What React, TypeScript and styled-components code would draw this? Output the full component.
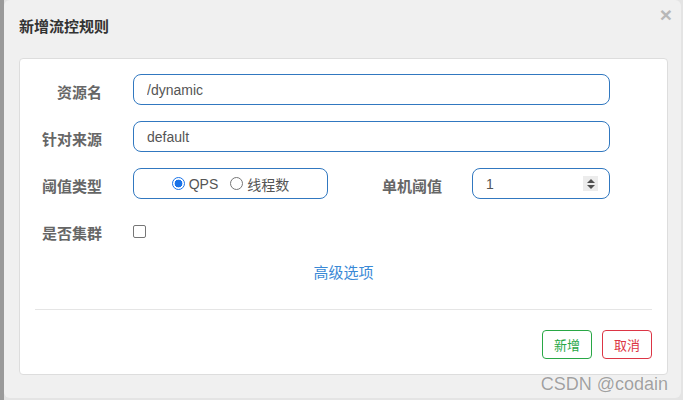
import styled, { createGlobalStyle } from 'styled-components';

const GlobalStyle = createGlobalStyle`
  html, body {
    margin: 0;
    padding: 0;
  }
  body {
    background: linear-gradient(to right, #9a9a9a 4px, #e4e4e4 4px);
    font-family: "Liberation Sans", "Noto Sans CJK SC", sans-serif;
  }
`;

const FONT = `"Liberation Sans", "Noto Sans CJK SC", sans-serif`;
const BLUE_BORDER = '#3178c0';

const Page = styled.div`
  position: relative;
  width: 683px;
  height: 400px;
  box-sizing: border-box;
  padding: 0 2px 2px 4px;
  display: flex;
  overflow: hidden;
`;

const Dialog = styled.div`
  flex: 1;
  display: flex;
  flex-direction: column;
  background: #f0f0f0;
  border-radius: 6px;
  padding: 0 13px 0 15px;
`;

const Header = styled.div`
  height: 58px;
  display: flex;
  justify-content: space-between;
  align-items: flex-start;
  flex-shrink: 0;
`;

const Title = styled.h4`
  margin: 17px 0 0;
  font-size: 15px;
  line-height: 20px;
  font-weight: 700;
  color: #333;
`;

const Close = styled.button`
  margin: 4px -4px 0 0;
  padding: 0;
  border: none;
  background: none;
  font-family: ${FONT};
  font-size: 21px;
  font-weight: 700;
  line-height: 1;
  color: #b8b8b8;
  cursor: pointer;
`;

const Panel = styled.div`
  height: 317px;
  box-sizing: border-box;
  background: #fff;
  border: 1px solid #ddd;
  border-radius: 4px;
  padding: 15px;
  display: flex;
  flex-direction: column;
`;

const Row = styled.div`
  display: flex;
  align-items: center;
  height: 31px;
  margin-bottom: 16px;
`;

const Label = styled.label<{ $width: number; $gap: number }>`
  width: ${({ $width }) => $width}px;
  padding: 4px ${({ $gap }) => $gap}px 0 0;
  box-sizing: border-box;
  flex-shrink: 0;
  text-align: right;
  font-size: 15px;
  font-weight: 700;
  color: #666;
`;

const TextInput = styled.input`
  width: 477px;
  height: 31px;
  box-sizing: border-box;
  border: 1px solid ${BLUE_BORDER};
  border-radius: 8px;
  padding: 0 13px;
  font-family: ${FONT};
  font-size: 14px;
  color: #555;
  outline: none;
`;

const RadioBox = styled.div`
  width: 195px;
  height: 31px;
  box-sizing: border-box;
  border: 1px solid ${BLUE_BORDER};
  border-radius: 8px;
  display: flex;
  align-items: center;
  justify-content: center;
  font-size: 14px;
  color: #555;
`;

const RadioOption = styled.span`
  display: flex;
  align-items: center;
  gap: 4px;
  margin: 0 6px;
`;

const RadioDot = styled.span<{ $checked?: boolean }>`
  width: 13px;
  height: 13px;
  box-sizing: border-box;
  border-radius: 50%;
  border: 1px solid ${({ $checked }) => ($checked ? '#1a73e8' : '#767676')};
  background: ${({ $checked }) =>
    $checked ? 'radial-gradient(circle, #1a73e8 0 3.6px, #fff 4.2px)' : '#fff'};
`;

const NumberBox = styled.div`
  width: 138px;
  height: 31px;
  box-sizing: border-box;
  border: 1px solid ${BLUE_BORDER};
  border-radius: 8px;
  display: flex;
  align-items: center;
  padding: 0 11px 0 13px;
  font-size: 14px;
  color: #555;
`;

const NumberValue = styled.span`
  flex: 1;
`;

const Spinner = styled.span`
  width: 15px;
  height: 15px;
  background: #ececec;
  display: flex;
  flex-direction: column;
  align-items: center;
  justify-content: center;
  gap: 2px;
`;

const Arrow = styled.span<{ $up?: boolean }>`
  width: 0;
  height: 0;
  border-left: 4px solid transparent;
  border-right: 4px solid transparent;
  ${({ $up }) => ($up ? 'border-bottom: 4px solid #505050;' : 'border-top: 4px solid #505050;')}
`;

const CheckBox = styled.span`
  width: 13px;
  height: 13px;
  margin-top: 2px;
  box-sizing: border-box;
  border: 1px solid #767676;
  border-radius: 2px;
  background: #fff;
`;

const LinkRow = styled.div`
  display: flex;
  justify-content: center;
  margin-top: 2px;
  height: 17px;
  line-height: 17px;
`;

const Link = styled.a`
  font-size: 15px;
  color: #3a89d6;
  text-decoration: none;
  cursor: pointer;
`;

const Divider = styled.hr`
  margin: 28px 0 0;
  border: none;
  border-top: 1px solid #e5e5e5;
`;

const Footer = styled.div`
  margin-top: 20px;
  display: flex;
  justify-content: flex-end;
  gap: 10px;
`;

const Button = styled.button<{ $color: string }>`
  width: 50px;
  height: 29px;
  padding: 0;
  box-sizing: border-box;
  background: #fff;
  border: 1px solid ${({ $color }) => $color};
  border-radius: 4px;
  color: ${({ $color }) => $color};
  font-family: ${FONT};
  font-size: 13px;
  cursor: pointer;
`;

const Watermark = styled.span`
  position: absolute;
  right: 15px;
  bottom: 5px;
  font-family: ${FONT};
  font-size: 18px;
  color: rgba(130, 130, 130, 0.75);
  text-shadow: 0 0 1px #fff;
  pointer-events: none;
`;

export default function App() {
  return (
    <>
      <GlobalStyle />
      <Page>
        <Dialog>
          <Header>
            <Title>新增流控规则</Title>
            <Close type="button" aria-label="close">×</Close>
          </Header>
          <Panel>
            <Row>
              <Label $width={98} $gap={31}>资源名</Label>
              <TextInput defaultValue="/dynamic" />
            </Row>
            <Row>
              <Label $width={98} $gap={31}>针对来源</Label>
              <TextInput defaultValue="default" />
            </Row>
            <Row>
              <Label $width={98} $gap={31}>阈值类型</Label>
              <RadioBox>
                <RadioOption>
                  <RadioDot $checked />
                  QPS
                </RadioOption>
                <RadioOption>
                  <RadioDot />
                  线程数
                </RadioOption>
              </RadioBox>
              <Label $width={144} $gap={30}>单机阈值</Label>
              <NumberBox>
                <NumberValue>1</NumberValue>
                <Spinner>
                  <Arrow $up />
                  <Arrow />
                </Spinner>
              </NumberBox>
            </Row>
            <Row>
              <Label $width={98} $gap={31}>是否集群</Label>
              <CheckBox />
            </Row>
            <LinkRow>
              <Link>高级选项</Link>
            </LinkRow>
            <Divider />
            <Footer>
              <Button type="button" $color="#28a745">新增</Button>
              <Button type="button" $color="#dc3545">取消</Button>
            </Footer>
          </Panel>
        </Dialog>
        <Watermark>CSDN @codain</Watermark>
      </Page>
    </>
  );
}
